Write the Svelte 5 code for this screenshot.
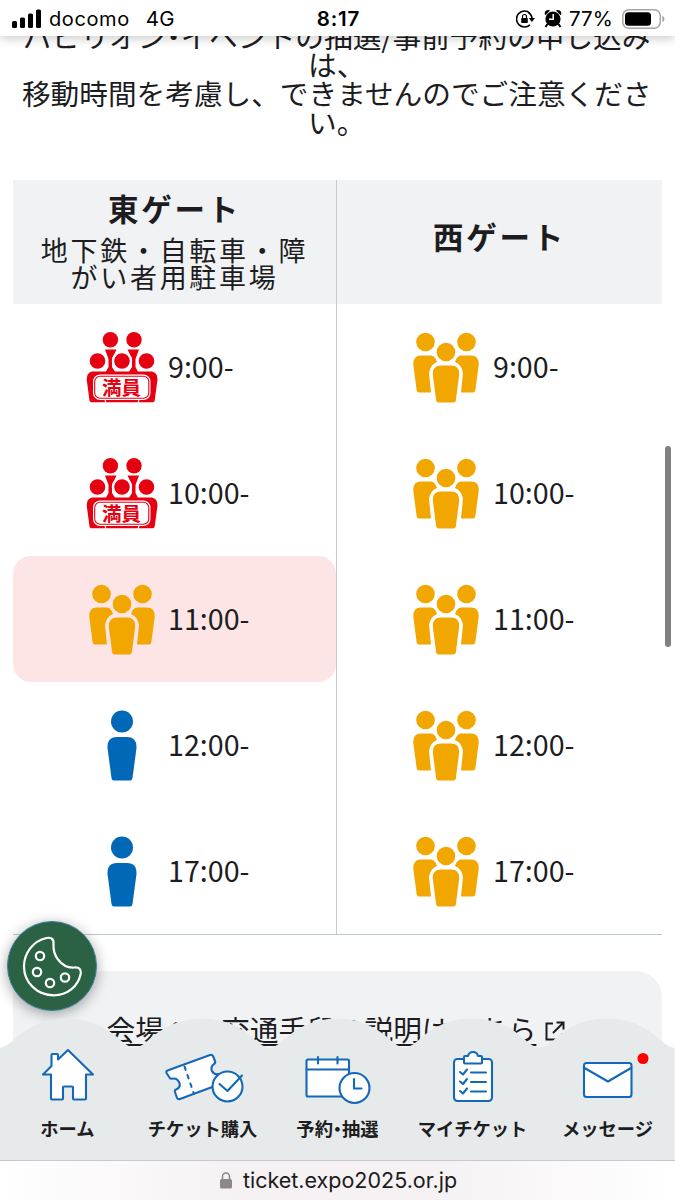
<script>
  const slots = [
    { east: ['full', '9:00-'], west: ['crowd', '9:00-'] },
    { east: ['full', '10:00-'], west: ['crowd', '10:00-'] },
    { east: ['crowd', '11:00-'], west: ['crowd', '11:00-'], picked: true },
    { east: ['single', '12:00-'], west: ['crowd', '12:00-'] },
    { east: ['single', '17:00-'], west: ['crowd', '17:00-'] },
  ];
  const tabs = [
    { id: 'home', label: 'ホーム' },
    { id: 'ticket', label: 'チケット購入' },
    { id: 'reserve', label: '予約・抽選' },
    { id: 'list', label: 'マイチケット' },
    { id: 'mail', label: 'メッセージ' },
  ];
  // one hump per tab, 135px apart
  const humps =
    'M-0.5 30' +
    tabs.map(() => 'q6 -1 13 -7 a77 77 0 0 1 109 0 q7 6 13 7').join('') +
    'V143H-0.5Z';
</script>

{#snippet dotted(text)}
  {#each text.split('・') as part, i}{#if i}<span class="dot">・</span>{/if}{part}{/each}
{/snippet}

{#snippet people(kind)}
  <svg class="people" width="72" height="72" viewBox="0 0 72 72">
    {#if kind === 'single'}
      <g fill="#0068b7">
        <circle cx="36" cy="11.5" r="11" />
        <path d="M31 27h10q10 0 9.5 11l-4 30q-.3 2.500-2.500 2.500H28q-2.200 0-2.500-2.500l-4-30Q21 27 31 27z" />
      </g>
    {:else if kind === 'crowd'}
      <g fill="#f2a600">
        <circle cx="15.500" cy="10" r="9.300" />
        <circle cx="56.500" cy="10" r="9.300" />
        <circle cx="36" cy="20" r="9.300" />
        <path d="M11 23.500h10q4 0 6 6.500q-7 3-8 11l2 19.500H9q-2 0-2.300-2L3.300 33q-.6-9.500 7.700-9.500z" />
        <path d="M61 23.500H51q-4 0-6 6.500q7 3 8 11l-2 19.500h12q2 0 2.300-2L68.700 33q.6-9.500-7.700-9.500z" />
        <path d="M31 33.500h10q8.500 0 8.200 9l-3.400 26q-.3 2-2.300 2h-15q-2 0-2.300-2l-3.400-26q-.3-9 8.200-9z" />
      </g>
    {:else}
      <g fill="#e60012">
        <path d="M19 17.500h11.500L26 27v8l5 8H18l4.500-8v-8zM41.500 17.500H53L49.500 27v8l4 8H41l5-8v-8z" />
        <circle cx="24.400" cy="7.700" r="7.700" />
        <circle cx="48" cy="7.700" r="7.700" />
      </g>
      <g fill="#e60012" stroke="#fff" stroke-width="2.400">
        <circle cx="11.500" cy="29" r="9" />
        <circle cx="36" cy="29" r="9" />
        <circle cx="60.500" cy="29" r="9" />
      </g>
      <path fill="#e60012" d="M6 39.500h60q5.500 1 5.500 8l-2.800 21q-.2 1.800-2 1.800H5.500q-1.800 0-2-1.800L.700 47.500Q.7 40.500 6 39.500z" />
      <path stroke="#fff" stroke-width="1.200" d="M19 67l.8 4M53 67l-.8 4" />
      <rect x="7" y="42.500" width="57.500" height="25.500" rx="7" fill="#fff" />
      <rect x="8.700" y="44.200" width="54.100" height="22.100" rx="5.500" fill="#fff" stroke="#e60012" stroke-width="1.100" />
      <text x="35.500" y="62.500" text-anchor="middle" fill="#e60012">満員</text>
    {/if}
  </svg>
{/snippet}

<div class="screen">
  <header class="status">
    <div class="side">
      <svg width="30" height="20" viewBox="0 0 30 20">
        <rect x="0" y="12" width="5" height="7" rx="1.500" />
        <rect x="8" y="8.500" width="5" height="10.500" rx="1.500" />
        <rect x="16" y="4.500" width="5" height="14.500" rx="1.500" />
        <rect x="24" y="0.500" width="5" height="18.500" rx="1.500" />
      </svg>
      <span class="carrier">docomo</span><span class="net">4G</span>
    </div>
    <b>8:17</b>
    <div class="side right">
      <svg width="19" height="18" viewBox="0 0 19 18">
        <path d="M13.800 3A8 8 0 1 0 14 14.800" fill="none" stroke="#000" stroke-width="1.600" />
        <path d="M12.500 2.500A8 8 0 0 1 16 9" fill="none" stroke="#000" stroke-width="1.600" />
        <path d="M12.800 8h6.200L15.900 12z" />
        <rect x="5.200" y="8" width="6.600" height="5" rx=".8" />
        <path d="M6.500 8V6.500a2 2 0 0 1 4 0V8" fill="none" stroke="#000" stroke-width="1.200" />
      </svg>
      <svg class="alarm" width="18" height="19" viewBox="0 0 18 19">
        <circle cx="9" cy="10" r="7.600" />
        <path d="M0.800 5.500Q0 1 4.800 1L6 1.600 1.600 6zM17.200 5.500Q18 1 13.200 1L12 1.600 16.400 6z" />
        <path d="M3.500 15l-2 3M14.500 15l2 3" stroke="#000" stroke-width="2" />
        <path d="M9.200 5v5.300H5" fill="none" stroke="#fff" stroke-width="1.500" />
      </svg>
      <span>77%</span>
      <svg class="battery" width="43" height="20" viewBox="0 0 43 20">
        <rect x=".8" y=".8" width="37.500" height="18.400" rx="6" fill="#fff" stroke="#a5a5a5" stroke-width="1.500" />
        <rect x="3" y="3.300" width="26" height="13.500" rx="3.500" />
        <path d="M40.300 6.800q2.200 1 2.200 3.200t-2.200 3.200z" fill="#a5a5a5" />
      </svg>
    </div>
  </header>

  <main>
    <p class="notice">{@render dotted('パビリオン・イベントの抽選/事前予約の申し込み')}<br />は、<br />移動時間を考慮し、できませんのでご注意くださ<br />い。</p>

    <section class="gates">
      <div class="row head">
        <div class="cell">
          <strong>東ゲート</strong>
          <span>地下鉄・自転車・障<br />がい者用駐車場</span>
        </div>
        <div class="cell"><strong>西ゲート</strong></div>
      </div>
      {#each slots as s}
        <div class="row">
          <div class="cell"><div class="slot" class:picked={s.picked}>{@render people(s.east[0])}<span>{s.east[1]}</span></div></div>
          <div class="cell"><div class="slot">{@render people(s.west[0])}<span>{s.west[1]}</span></div></div>
        </div>
      {/each}
    </section>

    <div class="card">
      <a href="#access">会場への交通手段の説明はこちら</a>
      <svg width="20" height="20" viewBox="0 0 20 20" fill="none" stroke="#1d1d1f" stroke-width="2">
        <path d="M8 2.500H1.500V18.500H17.500V12M11.500 1.500H18.500V8.500M18 2L8 12" />
      </svg>
    </div>
    <i class="scrollbar"></i>
  </main>

  <button class="cookie" aria-label="Cookie">
    <svg width="62" height="62" viewBox="0 0 62 62" fill="none" stroke="#fff" stroke-width="2.200">
      <path d="M30.500 3.500Q33 5 32.500 9Q32 18 37 24.500Q44 33.500 53.500 32.500Q60.500 32 59.800 38.500C57 52 46 60.300 33 60.300C16 60.300 3 47.500 3 31.500C3 18 12 6 25.500 3Q28.500 2.300 30.500 3.500Z" />
      <circle cx="19" cy="21" r="4.200" /><circle cx="16" cy="37" r="4.200" /><circle cx="29" cy="48" r="4.200" /><circle cx="44" cy="42.500" r="4.200" />
    </svg>
  </button>

  <nav>
    <svg class="wave" width="675" height="143" viewBox="0 0 675 143"><path d={humps} fill="#e6eaeb" /></svg>
    {#each tabs as t}
      <div class="tab">
        <svg width="80" height="60" viewBox="0 0 80 60" fill="#fff" stroke="#1568b8" stroke-width="2.100" stroke-linejoin="round" stroke-linecap="round">
          {#if t.id === 'home'}
            <path d="M40 6L65 30.500H58V54.500q0 1-1 1H46q-1 0-1-1V43.500q0-1-1-1H36q-1 0-1 1V54.500q0 1-1 1H24q-1 0-1-1V30.500H15L23.500 22V11q0-1 1-1h4.500q1 0 1 1V15.500Z" />
          {:else if t.id === 'ticket'}
            <path d="M4.500 26.500L47 11q2-.6 3 1l2 5q.7 2-1 3q-4 3-2 7q2 4 6 3q2-.4 3 2l2 7L17 55q-2 .6-3-1l-2-6q-.5-2 1-2.500q5-2 3.500-6.500q-2-5-6.500-4.500q-3 .8-3.500-1L3.500 29q-.5-2 1-2.500z" />
            <path d="M21.500 22.500L31 50" stroke-dasharray="3.500 5.500" fill="none" />
            <circle cx="64.500" cy="42.500" r="15" />
            <path d="M56.500 40L64.500 47L79 31.500" fill="none" />
          {:else if t.id === 'reserve'}
            <rect x="8.500" y="15.500" width="42.500" height="37" rx="1.500" />
            <path d="M8.500 25.500H51M20 13V19.500M39.500 13V19.500" />
            <circle cx="56.500" cy="44" r="15" />
            <path d="M56 35V44.500H63.500" fill="none" />
          {:else if t.id === 'list'}
            <rect x="21" y="15" width="38" height="42" rx="3.500" />
            <path d="M32 19.500q-1 0-1-1V13q0-1 1-1h3q1-4 5-4t5 4h3q1 0 1 1v5.500q0 1-1 1z" />
            <path fill="none" d="M27 28l3 2.500 4-5M27 37.500l3 2.500 4-5M27 47l3 2.500 4-5M38 28.500H53M38 38H53M38 47.500H53" />
          {:else}
            <rect x="16" y="19" width="47.500" height="34" rx="2.500" />
            <path d="M16.500 24L40 37.500L63 24" fill="none" />
            <circle cx="75" cy="14.500" r="5.500" fill="#f00" stroke="none" />
          {/if}
        </svg>
        <span>{@render dotted(t.label)}</span>
      </div>
    {/each}
  </nav>

  <footer>
    <svg width="12" height="17" viewBox="0 0 12 17">
      <rect x="0" y="7" width="12" height="9.500" rx="1.500" fill="#8a888a" />
      <path d="M2.500 7V4.500a3.500 3.500 0 0 1 7 0V7" fill="none" stroke="#8a888a" stroke-width="1.500" />
    </svg>
    <span>ticket.expo2025.or.jp</span>
  </footer>
</div>

<style>
  :global(body) { margin: 0; background: #fff; }
  .screen {
    position: relative;
    display: flex;
    flex-direction: column;
    width: 675px;
    height: 1200px;
    overflow: hidden;
    background: #fff;
    color: #1d1d1f;
    font-family: "Noto Sans CJK JP", sans-serif;
  }
  .status {
    z-index: 2;
    flex: none;
    box-sizing: border-box;
    display: grid;
    grid-template-columns: 1fr auto 1fr;
    align-items: center;
    height: 36px;
    padding: 1px 10px 0 12px;
    background: #fff;
    color: #000;
    font: 19.500px/34px Inter, sans-serif;
    box-shadow: 0 2px 10px rgba(0, 0, 0, 0.22);
  }
  .side { display: flex; align-items: center; }
  .side > svg { flex: none; }
  .right { justify-content: flex-end; }
  .right > span { font-size: 20.500px; letter-spacing: 0.1px; }
  .carrier { margin-left: 7px; font-size: 20px; letter-spacing: 0.600px; }
  .net { margin-left: 16px; font-size: 20.500px; letter-spacing: 0.3px; }
  .alarm { margin: 0 7px 0 9px; }
  .battery { margin-left: 9px; }
  b { font-size: 20.500px; font-weight: 600; letter-spacing: 0.800px; }
  /* middle dot set at half width */
  .dot { display: inline-block; width: 0.5em; text-indent: -0.25em; }

  main {
    position: relative;
    flex: 1;
    min-height: 0;
    overflow: hidden;
    padding: 0 13px;
  }
  .notice {
    margin: -14.5px -13px 0;
    text-align: center;
    font-size: 28.670px;
    line-height: 28.670px;
    white-space: nowrap;
    padding-right: 1.5px;
  }
  .gates {
    margin-top: 43.5px;
    border-bottom: 1px solid #b9c8c8;
  }
  .row { display: grid; grid-template-columns: 324px 325px; height: 126px; }
  .cell { display: flex; }
  .cell:first-child { border-right: 1px solid #c6cdd0; }
  .head { height: 124px; background: #f1f2f4; }
  .head .cell {
    flex-direction: column;
    align-items: center;
    justify-content: center;
    text-align: center;
    letter-spacing: 0.1em;
    font-size: 27px;
    line-height: 27px;
  }
  .head .cell > * { margin-right: 0; }
  .head .cell:last-child { padding-bottom: 12px; }
  .head strong { font-size: 30.500px; line-height: 30px; font-weight: 700; }
  .head span { margin-top: 13px; }
  .slot {
    flex: 1;
    display: flex;
    align-items: center;
    padding-left: 73px;
    font-size: 28.670px;
    line-height: 40px;
  }
  .slot span { margin: -2px 0 0 10px; }
  .cell:last-child .slot span { margin-left: 11px; }
  .picked { background: #fde5e6; border-radius: 18px; }
  .people { display: block; margin-top: 3px; }
  .people text { font-size: 19.500px; font-weight: 700; }
  .card {
    display: flex;
    justify-content: center;
    height: 150px;
    margin-top: 36px;
    padding: 40px 3px 0 0;
    border-radius: 26px;
    background: #f1f2f4;
    font-size: 28.670px;
    line-height: 36px;
  }
  .card a { color: inherit; text-decoration: underline; text-decoration-thickness: 2px; text-underline-offset: 3px; }
  .card svg { margin: 10px 0 0 9px; }
  .scrollbar {
    position: absolute;
    right: 4px;
    top: 410px;
    width: 6px;
    height: 201px;
    border-radius: 3px;
    background: #808080;
  }
  .cookie {
    position: absolute;
    left: 7px;
    top: 921px;
    display: grid;
    place-items: center;
    width: 90px;
    height: 90px;
    padding: 0;
    border: 1px solid #3c83a0;
    border-radius: 50%;
    background: #2b6244;
    box-shadow: 0 3px 14px rgba(0, 0, 0, 0.35);
  }
  nav {
    position: absolute;
    left: 0;
    bottom: 39px;
    display: grid;
    grid-template-columns: repeat(5, 135px);
    width: 675px;
    height: 143px;
  }
  .wave { position: absolute; inset: 0; }
  .tab {
    position: relative;
    display: flex;
    flex-direction: column;
    align-items: center;
    padding-top: 26px;
    font-size: 18.300px;
    font-weight: 700;
    line-height: 24px;
    white-space: nowrap;
  }
  .tab svg { overflow: visible; }
  .tab > span { margin-top: 12px; }
  footer {
    position: relative;
    flex: none;
    box-sizing: border-box;
    display: flex;
    align-items: center;
    justify-content: center;
    gap: 11px;
    height: 40px;
    padding-left: 2px;
    border-top: 1px solid #c9c9cb;
    background: linear-gradient(90deg, #fff 0, #f6f2f3 35%, #f6f2f3 65%, #fff 100%);
    color: #1b1b1d;
    font: 21.500px/36px Inter, sans-serif;
  }
  footer span { margin-top: -2px; }
</style>
